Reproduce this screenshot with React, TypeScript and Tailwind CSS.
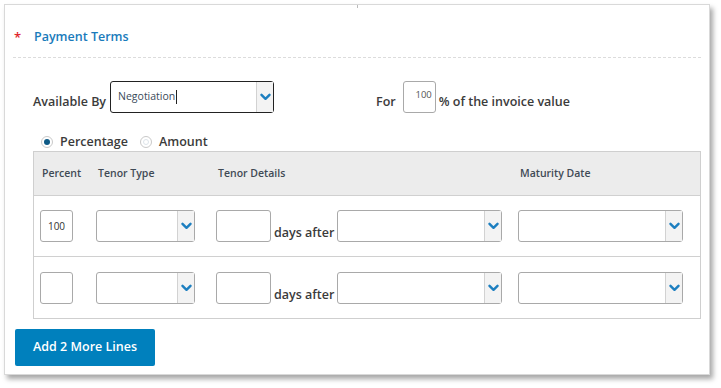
import React from 'react';

const font = { fontFamily: '"Open Sans", "Noto Sans", sans-serif' };

function Chevron() {
  return (
    <svg width="11" height="8" viewBox="0 0 11 8" fill="none">
      <path d="M1.5 1.8 L5.5 5.8 L9.5 1.8" stroke="#1d7fc0" strokeWidth="2.4" strokeLinecap="round" strokeLinejoin="round" />
    </svg>
  );
}

function Select({ className, dark, value }: { className: string; dark?: boolean; value?: string }) {
  return (
    <div
      className={
        'flex h-[32px] items-stretch rounded-[3px] border bg-white ' +
        (dark ? 'border-[#222] ' : 'border-[#a9a9a9] ') +
        className
      }
    >
      <div className="flex flex-1 items-center pl-[7px] text-[10.5px] text-[#3a4a5a]">
        {value}
        {value && <span className="ml-[1px] inline-block h-[14px] w-px bg-[#222]" />}
      </div>
      <div className="flex w-[17px] items-center justify-center border-l border-[#d2d2d2] bg-[#f3f3f3]">
        <Chevron />
      </div>
    </div>
  );
}

function Box({ className, value }: { className: string; value?: string }) {
  return (
    <div
      className={
        'flex h-[32px] items-center justify-center rounded-[3px] border border-[#a9a9a9] bg-white text-[10px] text-[#333] ' +
        className
      }
    >
      {value}
    </div>
  );
}

function Row({ percent, last }: { percent?: string; last?: boolean }) {
  return (
    <div className={'flex h-[61px] items-center ' + (last ? '' : 'border-b border-[#d0d0d0]')}>
      <div className="w-[62px] pl-[6px]">
        <Box className="w-[33px]" value={percent} />
      </div>
      <div className="w-[120px]">
        <Select className="w-[99px]" />
      </div>
      <div className="flex w-[302px] items-end">
        <Box className="w-[55px]" />
        <span className="mx-[3px] mb-[1px] text-[12.5px] font-semibold leading-[16px] text-[#3b3b3b]">days after</span>
        <Select className="w-[165px]" />
      </div>
      <div>
        <Select className="w-[165px]" />
      </div>
    </div>
  );
}

export default function App() {
  return (
    <div className="h-[388px] w-[721px] bg-white" style={font}>
      <div className="relative ml-[4px] mt-[4px] h-[371px] w-[706px] border border-[#d9d9d9] bg-white shadow-[3px_4px_5px_rgba(0,0,0,0.35)]">
        <div className="absolute left-[352px] top-0 h-[3px] w-px bg-[#bbb]" />
        <div className="mx-[8px] flex h-[53px] items-end border-b border-dashed border-[#dcdcdc] pb-[10px]">
          <span className="w-[21px] pl-[1px] text-[13px] font-semibold text-[#e0262d]">*</span>
          <span className="text-[12.5px] font-semibold text-[#1a7bbb]">Payment Terms</span>
        </div>

        <div className="mt-[23px] flex items-end pl-[28px]">
          <span className="mb-[1px] text-[12.5px] font-semibold text-[#3b3b3b]">Available By</span>
          <Select className="ml-[4px] w-[164px]" dark value="Negotiation" />
          <span className="mb-[1px] ml-[102px] text-[12.5px] font-semibold text-[#3b3b3b]">For</span>
          <div className="ml-[7px] flex h-[32px] w-[33px] justify-end rounded-[3px] border border-[#a9a9a9] pr-[3px] pt-[8px] text-[9.5px] leading-none text-[#555]">
            100
          </div>
          <span className="mb-[1px] ml-[3px] text-[12.5px] font-semibold text-[#3b3b3b]">% of the invoice value</span>
        </div>

        <div className="mt-[21px] flex items-center pl-[36px] text-[12.5px] font-semibold text-[#3b3b3b]">
          <span className="flex h-[12px] w-[12px] items-center justify-center rounded-full border border-[#c9c9c9] bg-white">
            <span className="h-[6px] w-[6px] rounded-full bg-[#0d5a86]" />
          </span>
          <span className="ml-[7px] leading-[16px]">Percentage</span>
          <span className="ml-[12px] flex h-[12px] w-[12px] items-center justify-center rounded-full border border-[#c9c9c9] bg-white">
            <span className="h-[6px] w-[6px] rounded-full border border-[#dde4ea]" />
          </span>
          <span className="ml-[7px] leading-[16px]">Amount</span>
        </div>

        <div className="ml-[28px] mt-[1px] w-[668px] border border-[#cfcfcf]">
          <div className="flex h-[44px] items-center border-b border-[#d0d0d0] bg-[#ececec] text-[10.5px] font-semibold text-[#3f4a55]">
            <span className="w-[64px] pl-[8px]">Percent</span>
            <span className="w-[120px]">Tenor Type</span>
            <span className="w-[302px]">Tenor Details</span>
            <span>Maturity Date</span>
          </div>
          <Row percent="100" />
          <Row last />
        </div>

        <div className="ml-[10px] mt-[10px]">
          <button className="h-[37px] w-[140px] rounded-[2px] bg-[#0080bd] text-[12.5px] font-semibold text-white">
            Add 2 More Lines
          </button>
        </div>
      </div>
    </div>
  );
}
